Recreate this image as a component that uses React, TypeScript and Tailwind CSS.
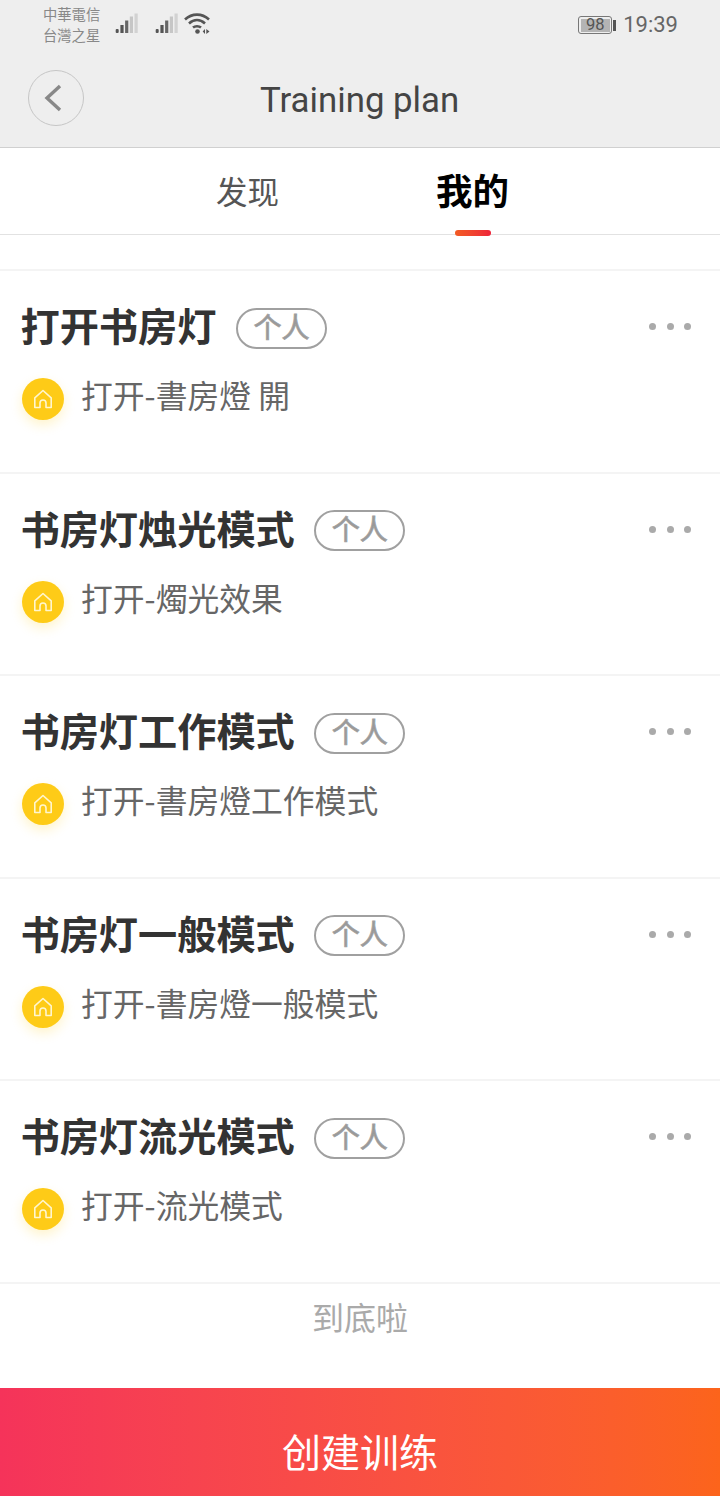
const plans = [
  { title: '打开书房灯', action: '打开-書房燈 開' },
  { title: '书房灯烛光模式', action: '打开-燭光效果' },
  { title: '书房灯工作模式', action: '打开-書房燈工作模式' },
  { title: '书房灯一般模式', action: '打开-書房燈一般模式' },
  { title: '书房灯流光模式', action: '打开-流光模式' },
];

const SignalBars = () => (
  <svg width="23" height="21" viewBox="0 0 23 21">
    <rect x="0.7" y="16" width="3" height="4" rx="1" fill="#555" />
    <rect x="5.4" y="12" width="3.2" height="8" fill="#555" />
    <rect x="10.1" y="7.5" width="3.2" height="12.5" fill="#666" />
    <rect x="14.8" y="3.5" width="3.2" height="16.5" fill="#c6c6c6" />
    <rect x="19.5" y="0.5" width="3.2" height="19.5" fill="#d2d2d2" />
  </svg>
);

const Wifi = () => (
  <svg width="26" height="21" viewBox="0 0 26 21" fill="none" stroke="#555" strokeWidth="2.6">
    <path d="M1 6.5 C8 0 18 0 25 6.5" />
    <path d="M5 10.5 C10 6 16 6 21 10.5" />
    <path d="M9 14.5 C11 12.8 15 12.8 17 14.5" />
    <circle cx="13.5" cy="18.5" r="2.3" fill="#555" stroke="none" />
    <path d="M21 16 V21 L18.7 18.5 Z" fill="#555" stroke="none" />
    <path d="M22.3 16 V21 L25.5 18.5 Z" fill="#555" stroke="none" />
  </svg>
);

const HomeBadge = () => (
  <div className="flex h-[42px] w-[42px] items-center justify-center rounded-full bg-[#fecb17] shadow-[0_5px_12px_rgba(253,203,22,0.22)]">
    <svg width="20" height="20" viewBox="0 0 20 20" fill="none" stroke="#fff6cf" strokeWidth="1.6" strokeLinejoin="round">
      <path d="M1.8 8.8 L10 1.5 L18.2 8.8 V18.5 H13 V14 A3 3 0 0 0 7 14 V18.5 H1.8 Z" />
    </svg>
  </div>
);

const PlanRow = ({ title, action }: { title: string; action: string }) => (
  <div className="h-[202.6px] border-t-2 border-[#f4f4f4] pl-[20.5px] pr-[29px]">
    <div className="flex items-center justify-between pt-[34px]">
      <div className="flex h-[46px] items-center">
        <h2 className="mb-[8px] text-[39.2px] font-bold leading-[46px] text-[#333]">{title}</h2>
        <span className="ml-[19.5px] flex h-[41px] w-[91px] items-center justify-center rounded-full border-2 border-[#a0a0a0] pb-[5px] text-[28px] leading-none text-[#999] [-webkit-text-stroke:0.8px_#a0a0a0]">
          个人
        </span>
      </div>
      <div className="mb-[3px] flex gap-[10.5px]">
        <span className="h-[7px] w-[7px] rounded-full bg-[#aaa]" />
        <span className="h-[7px] w-[7px] rounded-full bg-[#aaa]" />
        <span className="h-[7px] w-[7px] rounded-full bg-[#aaa]" />
      </div>
    </div>
    <div className="mt-[27px] flex h-[42px] items-center gap-[17px] pl-[1.5px]">
      <HomeBadge />
      <span className="mb-[10px] text-[31.8px] leading-[42px] text-[#666]">{action}</span>
    </div>
  </div>
);

const App = () => {
  return (
    <div className="flex h-[1496px] w-[720px] flex-col overflow-hidden bg-white font-['Noto_Sans_CJK_SC','Noto_Sans',sans-serif]">
      <div className="h-[148px] border-b border-[#d0d0d0] bg-[#eeeeee]">
        <div className="flex h-[50px] items-start justify-between pl-[43px] pr-[42px] pt-[3px]">
          <div className="flex items-start">
            <div className="w-[60px] text-[14.3px] leading-[21px] text-[#888]">
              <div>中華電信</div>
              <div>台灣之星</div>
            </div>
            <div className="ml-[12px] mt-[10px]"><SignalBars /></div>
            <div className="ml-[17px] mt-[10px]"><SignalBars /></div>
            <div className="ml-[6px] mt-[10px]"><Wifi /></div>
          </div>
          <div className="mt-[8px] flex items-center font-['Roboto',sans-serif]">
            <div className="flex h-[18px] w-[34px] items-center rounded-[3px] border border-[#777] p-[1.5px]">
              <div className="flex h-full w-full items-center justify-center bg-[#b4b4b4] text-[16.5px] leading-none text-[#555]">98</div>
            </div>
            <div className="ml-[1px] h-[11px] w-[3px] bg-[#555]" />
            <span className="ml-[7px] text-[22px] leading-[28px] text-[#666]">19:39</span>
          </div>
        </div>
        <div className="flex h-[96px] items-center pl-[28px]">
          <button className="flex h-[56px] w-[56px] items-center justify-center rounded-full border-[1.5px] border-[#c6c6c6]">
            <svg className="mr-[7px]" width="18" height="28" viewBox="0 0 18 28" fill="none" stroke="#888" strokeWidth="3.4">
              <path d="M16 2 L3 14 L16 26" />
            </svg>
          </button>
          <h1 className="ml-[176px] mt-[4px] font-['Roboto',sans-serif] text-[34.8px] leading-none text-[#444]">Training plan</h1>
        </div>
      </div>

      <div className="flex h-[87px] border-b border-[#e2e2e2] pl-[216px]">
        <span className="mt-[19px] text-[31.5px] leading-[46px] text-[#555]">发现</span>
        <div className="relative ml-[157px] mt-[17px] w-[73px]">
          <span className="block text-[36.5px] font-bold leading-[50px] text-black">我的</span>
          <span className="absolute left-[19px] top-[65px] h-[6px] w-[36px] rounded-full bg-gradient-to-r from-[#f25a22] to-[#ee2238]" />
        </div>
      </div>

      <div className="h-[34px]" />

      {plans.map(plan => (
        <PlanRow key={plan.title} title={plan.title} action={plan.action} />
      ))}

      <div className="flex flex-1 justify-center border-t-2 border-[#f4f4f4] pt-[9px] text-[32px] leading-[46px] text-[#aaa]">
        到底啦
      </div>

      <button className="flex h-[108px] w-full shrink-0 items-center justify-center bg-gradient-to-r from-[#f5335a] to-[#fc641b] pt-[16px] text-[39px] text-white">
        创建训练
      </button>
    </div>
  );
};

export default App;
